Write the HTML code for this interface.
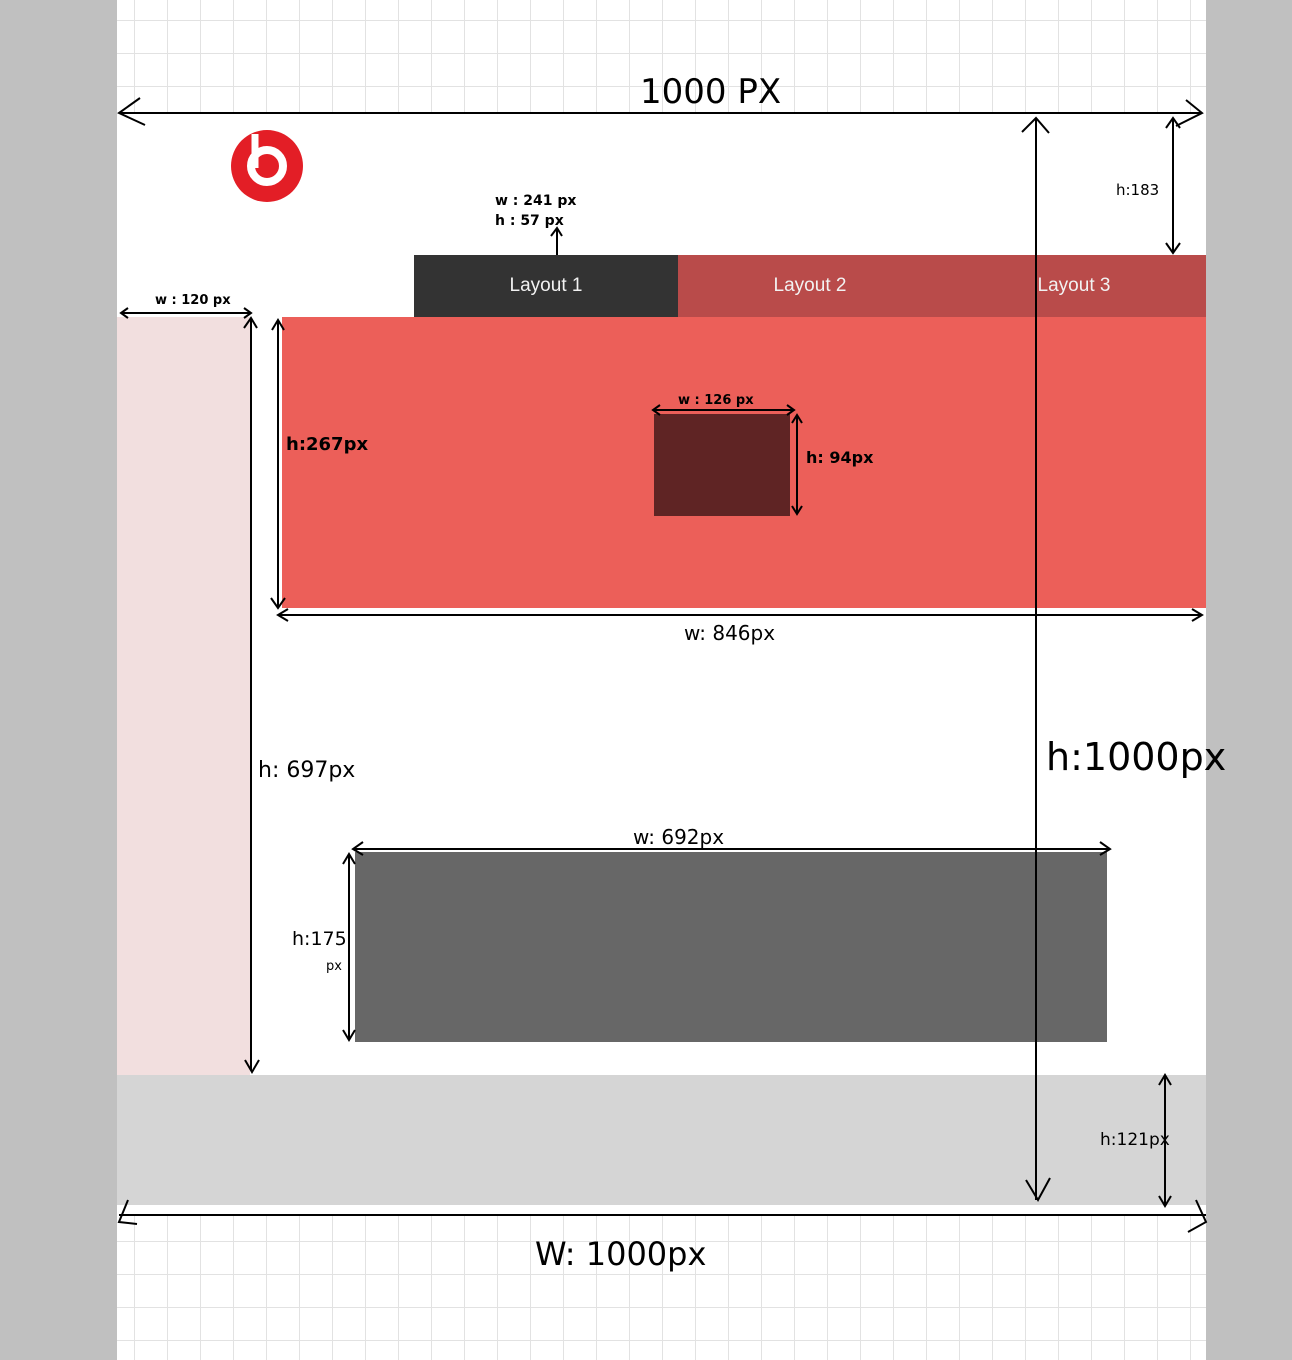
<!DOCTYPE html>
<html><head><style>
html,body{margin:0;padding:0;}
body{width:1292px;height:1360px;position:relative;overflow:hidden;background:#c0c0c0;font-family:"Liberation Sans",sans-serif;}
.a{position:absolute;}
#page{left:117px;top:0;width:1089px;height:1360px;background-color:#fff;
background-image:linear-gradient(to right,#e2e2e2 1px,transparent 1px),linear-gradient(to bottom,#e2e2e2 1px,transparent 1px);
background-size:33px 33px;background-position:17px 20px;}
.tab{top:255px;height:62px;width:264px;color:#f2f2f2;font-size:19px;line-height:62px;text-align:center;}
</style></head><body>
<div class="a" id="page"></div>
<div class="a" style="left:117px;top:113px;width:1089px;height:1102px;background:#fff"></div>
<div class="a" style="left:117px;top:1075px;width:1089px;height:130px;background:#d5d5d5"></div>
<div class="a" style="left:117px;top:317px;width:133px;height:758px;background:#f2dfdf"></div>
<div class="a" style="left:282px;top:317px;width:924px;height:291px;background:#ec5f59"></div>
<div class="a" style="left:654px;top:414px;width:136px;height:102px;background:#5f2424"></div>
<div class="a" style="left:355px;top:852px;width:752px;height:190px;background:#676767"></div>
<div class="a tab" style="left:414px;background:#333333">Layout 1</div>
<div class="a tab" style="left:678px;background:#b94b4a">Layout 2</div>
<div class="a tab" style="left:942px;background:#b94b4a">Layout 3</div>
<svg class="a" style="left:0;top:0" width="1292" height="1360" viewBox="0 0 1292 1360">
<circle cx="267" cy="166" r="36" fill="#e31e26"/>
<circle cx="267" cy="166" r="16" fill="none" stroke="#fff" stroke-width="8"/>
<line x1="255" y1="134" x2="255" y2="168" stroke="#fff" stroke-width="7"/>
<g stroke="#000" stroke-width="2" fill="none">
<path d="M119 113H1202M140 98L119 113L145 125M1186 100L1202 113L1176 126"/>
<path d="M1036 118V1200M1022 132L1036 118L1049 133M1026 1180L1038 1200L1050 1178"/>
<path d="M1173 118V253M1166 128L1173 118L1180 128M1166 243L1173 253L1180 243"/>
<path d="M557 255V228M551 236L557 228L562 236"/>
<path d="M121 313H251M128 308L121 313L128 318M244 308L251 313L244 318"/>
<path d="M251 318V1070M244 328L251 318L257 328M245 1060L252 1072L259 1060"/>
<path d="M278 320V608M272 330L278 320L284 330M271 598L278 608L285 598"/>
<path d="M278 615H1202M288 609L278 615L288 621M1192 609L1202 615L1192 621"/>
<path d="M653 410H794M660 405L653 410L660 415M787 405L794 410L787 415"/>
<path d="M797 415V514M792 423L797 415L802 423M792 506L797 514L802 506"/>
<path d="M353 849H1110M363 842L353 849L363 855M1100 842L1110 849L1100 855"/>
<path d="M349 854V1040M343 864L349 854L355 864M343 1030L349 1040L355 1030"/>
<path d="M1165 1075V1206M1159 1085L1165 1075L1171 1085M1159 1196L1165 1206L1171 1196"/>
<path d="M119 1215H1206M128 1200L119 1222L137 1224M1196 1200L1206 1222L1188 1232"/>
</g>
<g font-family="DejaVu Sans,sans-serif" fill="#000">
<text x="640" y="103" font-size="34">1000 PX</text>
<text x="495" y="205" font-size="14" font-weight="bold">w : 241 px</text>
<text x="495" y="225" font-size="14" font-weight="bold">h : 57 px</text>
<text x="1116" y="195" font-size="15">h:183</text>
<text x="155" y="304" font-size="13" font-weight="bold">w : 120 px</text>
<text x="286" y="450" font-size="18" font-weight="bold">h:267px</text>
<text x="678" y="404" font-size="13" font-weight="bold">w : 126 px</text>
<text x="806" y="463" font-size="16" font-weight="bold">h: 94px</text>
<text x="684" y="640" font-size="20">w: 846px</text>
<text x="258" y="777" font-size="22">h: 697px</text>
<text x="1046" y="770" font-size="38">h:1000px</text>
<text x="633" y="844" font-size="20">w: 692px</text>
<text x="292" y="945" font-size="19">h:175</text>
<text x="326" y="970" font-size="13">px</text>
<text x="1100" y="1145" font-size="17">h:121px</text>
<text x="535" y="1265" font-size="32">W: 1000px</text>
</g>
</svg>
</body></html>
